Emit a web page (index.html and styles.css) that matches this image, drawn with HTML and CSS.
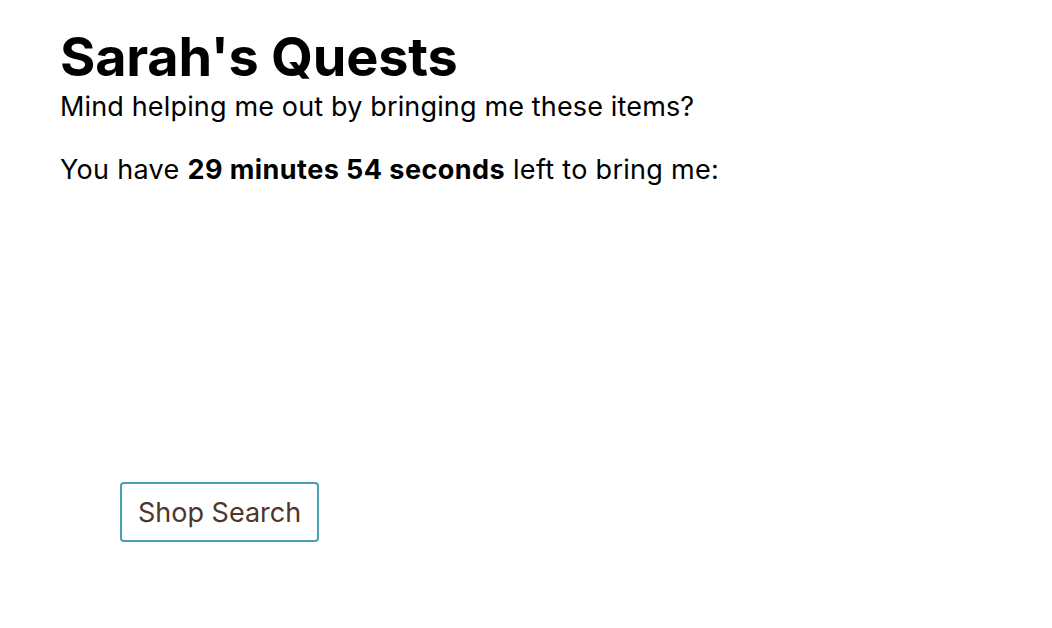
FILE: index.html
```html
<!DOCTYPE html>
<html>
<head>
<meta charset="utf-8">
<link rel="stylesheet" href="styles.css">
</head>
<body>
<main class="page">
  <h1 class="title">Sarah's Quests</h1>
  <p class="subtitle">Mind helping me out by bringing me these items?</p>
  <p class="timer">You have <strong>29 minutes 54 seconds</strong> left to bring me:</p>
  <ul class="items"></ul>
  <div class="actions">
    <button class="shop-btn">Shop Search</button>
  </div>
</main>
</body>
</html>
```
FILE: styles.css
```css
html, body {
  margin: 0;
  padding: 0;
  background: #fff;
}
body {
  font-family: Inter, "Noto Sans", sans-serif;
  color: #000;
}
.page {
  padding: 24px 60px;
}
.title {
  margin: 0;
  font-size: 54px;
  font-weight: 700;
  line-height: 66px;
  letter-spacing: -0.2px;
}
.subtitle {
  margin: 0;
  font-size: 27px;
  line-height: 33px;
  letter-spacing: 0.15px;
}
.timer {
  margin: 30px 0 0;
  font-size: 27px;
  line-height: 33px;
  letter-spacing: 0.3px;
}
.timer strong {
  letter-spacing: 0.45px;
}
.items {
  margin: 0;
  padding: 0;
  height: 296px;
  list-style: none;
}
.actions {
  padding-left: 60px;
}
.shop-btn {
  font-family: inherit;
  font-size: 27px;
  color: #4e3629;
  background: #fff;
  border: 2px solid #4a9fb5;
  border-radius: 4px;
  height: 60px;
  padding: 0 16px;
}
```
